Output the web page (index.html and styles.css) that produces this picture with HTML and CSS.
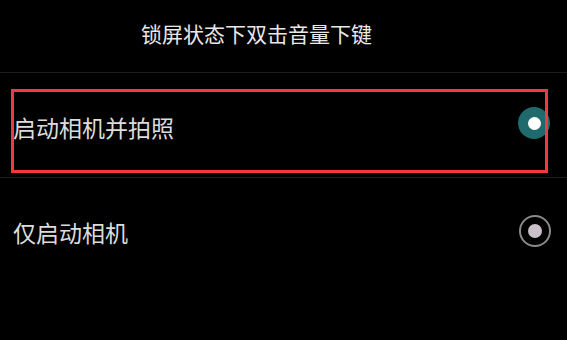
FILE: index.html
```html
<!DOCTYPE html>
<html lang="zh-CN">
<head>
<meta charset="utf-8">
<title>锁屏状态下双击音量下键</title>
<link rel="stylesheet" href="styles.css">
</head>
<body>
<div class="screen">
  <header class="title"><span class="title-text">锁屏状态下双击音量下键</span></header>
  <ul class="options">
    <li class="option">
      <span class="label">启动相机并拍照</span>
      <span class="radio checked"><span class="dot"></span></span>
    </li>
    <li class="option">
      <span class="label">仅启动相机</span>
      <span class="radio"><span class="dot"></span></span>
    </li>
  </ul>
  <div class="highlight"></div>
</div>
</body>
</html>
```
FILE: styles.css
```css
html, body {
  margin: 0;
  padding: 0;
  background: #000;
}
.screen {
  position: relative;
  width: 567px;
  height: 340px;
  background: #000;
  font-family: "Noto Sans CJK SC", "Noto Sans", sans-serif;
  overflow: hidden;
}
.title {
  height: 72px;
  display: flex;
  align-items: center;
  justify-content: center;
  color: #e8e8e8;
  font-size: 21px;
  border-bottom: 1px solid #1c1c1c;
  padding-right: 54px;
}
.title-text {
  line-height: 1;
  margin-bottom: 5px;
}
.options {
  list-style: none;
  margin: 0;
  padding: 0;
}
.option {
  height: 104px;
  display: flex;
  align-items: center;
  justify-content: space-between;
  padding: 0 16px 0 13px;
  border-bottom: 1px solid #1c1c1c;
}
.option:last-child {
  border-bottom: none;
}
.label {
  color: #dcdcdc;
  font-size: 23px;
  line-height: 1;
  padding-top: 4px;
}
.radio {
  width: 32px;
  height: 32px;
  border-radius: 50%;
  box-sizing: border-box;
  display: flex;
  align-items: center;
  justify-content: center;
  border: 2px solid #8a8a8a;
  margin-top: 2px;
}
.radio .dot {
  width: 14px;
  height: 14px;
  border-radius: 50%;
  background: #c9c0c9;
}
.radio.checked {
  border: none;
  background: #1e6a6d;
  margin-top: -4px;
  margin-right: 1px;
}
.radio.checked .dot {
  width: 13px;
  height: 13px;
  background: #fff;
}
.highlight {
  position: absolute;
  left: 11px;
  top: 89px;
  width: 537px;
  height: 84px;
  box-sizing: border-box;
  border: 3px solid #f23a3e;
  pointer-events: none;
}
```
